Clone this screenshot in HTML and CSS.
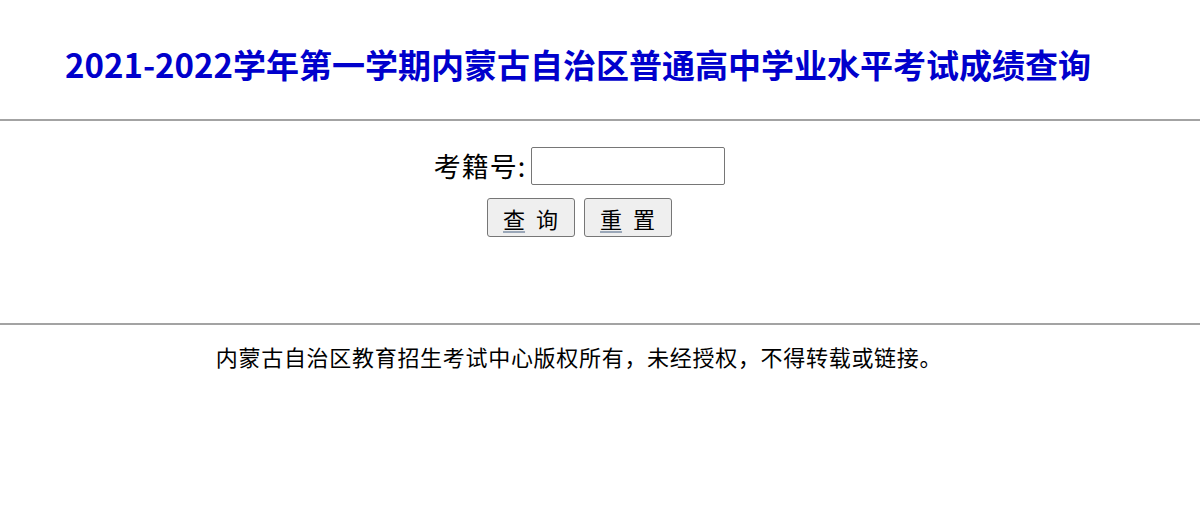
FILE: index.html
```html
<!DOCTYPE html>
<html lang="zh-CN">
<head>
<meta charset="utf-8">
<title>成绩查询</title>
<link rel="stylesheet" href="styles.css">
</head>
<body>
<header class="header">
  <h1 class="title">2021-2022学年第一学期内蒙古自治区普通高中学业水平考试成绩查询</h1>
</header>
<div class="rule"></div>
<form class="query">
  <div class="field">
    <label class="label" for="ksh">考籍号:</label>
    <input class="input" id="ksh" type="text">
  </div>
  <div class="actions">
    <button class="btn" type="button"><span class="key">查</span> 询</button>
    <button class="btn" type="reset"><span class="key">重</span> 置</button>
  </div>
</form>
<div class="rule"></div>
<footer class="footer">
  <p class="copy">内蒙古自治区教育招生考试中心版权所有，未经授权，不得转载或链接。</p>
</footer>
</body>
</html>
```

FILE: styles.css
```css
html, body {
  margin: 0;
  padding: 0;
  background: #ffffff;
}
body {
  font-family: "Noto Sans CJK SC", "Noto Sans", sans-serif;
  color: #000;
}
.header {
  height: 119px;
  display: flex;
  align-items: center;
  justify-content: center;
  padding-right: 44px;
  box-sizing: border-box;
}
.title {
  margin: 0;
  padding-top: 8px;
  font-size: 33px;
  font-weight: 700;
  color: #0000cc;
  letter-spacing: 0;
  white-space: nowrap;
}
.rule {
  height: 0;
  border-top: 2px solid #a3a3a3;
}
.query {
  display: flex;
  flex-direction: column;
  align-items: center;
  padding-top: 26px;
  padding-right: 40px;
  height: 202px;
  box-sizing: border-box;
  gap: 13px;
}
.field {
  display: flex;
  align-items: center;
  gap: 5px;
  margin-right: 1px;
}
.label {
  font-size: 27px;
  line-height: 38px;
  letter-spacing: 1px;
  font-family: "Noto Sans CJK SC", sans-serif;
}
.input {
  width: 194px;
  height: 38px;
  box-sizing: border-box;
  border: 1px solid #767676;
  border-radius: 2px;
  padding: 0 4px;
  font-size: 16px;
  background: #fff;
}
.actions {
  display: flex;
  gap: 9px;
  margin-right: 2px;
}
.btn {
  width: 88px;
  height: 39px;
  box-sizing: border-box;
  border: 1px solid #767676;
  border-radius: 3px;
  background: #efefef;
  font-family: "Noto Sans CJK SC", sans-serif;
  font-size: 22px;
  color: #000;
  padding: 0;
  line-height: 1;
  white-space: pre;
  word-spacing: 6px;
}
.key {
  text-decoration: underline;
  text-decoration-color: #9aa7b8;
  text-underline-offset: 3px;
}
.footer {
  display: flex;
  justify-content: center;
  padding-right: 42px;
  padding-top: 16px;
}
.copy {
  margin: 0;
  font-size: 22px;
  line-height: 30px;
  letter-spacing: 0.7px;
}
```
